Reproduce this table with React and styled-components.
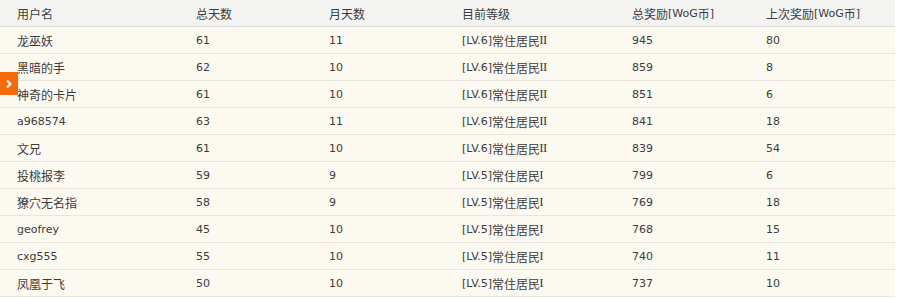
import React from "react";
import styled, { createGlobalStyle } from "styled-components";

const Global = createGlobalStyle`
  html, body { margin: 0; padding: 0; background: #fff; }
  body { font-family: "DejaVu Sans", "Noto Sans CJK SC", sans-serif; }
`;

const Wrap = styled.div`
  position: relative;
  width: 895px;
`;

const Table = styled.div`
  display: grid;
  grid-template-columns: 179px 133px 133px 170px 134px 146px;
  background: #fcf9f1;
`;

const Cell = styled.div`
  height: 26px;
  border-bottom: 1px solid ${p => (p.$head ? "#dcdcdc" : "#e9e5dc")};
  background: ${p => (p.$head ? "#f3f3f2" : "transparent")};
  padding-left: 17px;
  display: flex;
  align-items: center;
  font-size: 11px;
  color: #3c3c3c;
  font-family: "DejaVu Sans", "Noto Sans CJK SC", sans-serif;
  white-space: nowrap;
`;

const Cjk = styled.span`
  font-family: "Noto Sans CJK SC", sans-serif;
  font-size: 12px;
`;

const Roman = styled.span`
  font-family: "Liberation Serif", serif;
  font-size: 13px;
  letter-spacing: -0.5px;
  margin-left: -1px;
`;

const Tab = styled.div`
  position: absolute;
  left: 0;
  top: 72px;
  width: 18px;
  height: 23px;
  background: #f46a0c;
  display: flex;
  align-items: center;
  justify-content: center;
`;

const SPLIT_RE = /([ⅠⅡ]+|[\u3000-\u9fff\uff00-\uffef]+)/;

function Text({ children }) {
  const parts = String(children).split(SPLIT_RE);
  return parts.map((p, i) => {
    if (!p) return null;
    if (/^[ⅠⅡ]+$/.test(p)) return <Roman key={i}>{p.replace(/Ⅱ/g, "II").replace(/Ⅰ/g, "I")}</Roman>;
    if (i % 2 === 1) return <Cjk key={i}>{p}</Cjk>;
    return <span key={i}>{p}</span>;
  });
}

const head = ["用户名", "总天数", "月天数", "目前等级", "总奖励[WoG币]", "上次奖励[WoG币]"];
const rows = [
  ["龙巫妖", "61", "11", "[LV.6]常住居民Ⅱ", "945", "80"],
  ["黑暗的手", "62", "10", "[LV.6]常住居民Ⅱ", "859", "8"],
  ["神奇的卡片", "61", "10", "[LV.6]常住居民Ⅱ", "851", "6"],
  ["a968574", "63", "11", "[LV.6]常住居民Ⅱ", "841", "18"],
  ["文兄", "61", "10", "[LV.6]常住居民Ⅱ", "839", "54"],
  ["投桃报李", "59", "9", "[LV.5]常住居民Ⅰ", "799", "6"],
  ["獠穴无名指", "58", "9", "[LV.5]常住居民Ⅰ", "769", "18"],
  ["geofrey", "45", "10", "[LV.5]常住居民Ⅰ", "768", "15"],
  ["cxg555", "55", "10", "[LV.5]常住居民Ⅰ", "740", "11"],
  ["凤凰于飞", "50", "10", "[LV.5]常住居民Ⅰ", "737", "10"],
];

export default function App() {
  return (
    <Wrap>
      <Global />
      <Table>
        {head.map((h, i) => (
          <Cell key={"h" + i} $head><Text>{h}</Text></Cell>
        ))}
        {rows.map((r, ri) =>
          r.map((c, ci) => (
            <Cell key={ri + "-" + ci}><Text>{c}</Text></Cell>
          ))
        )}
      </Table>
      <Tab>
        <svg width="8" height="10" viewBox="0 0 8 10">
          <path d="M2 1.5 L5.5 5 L2 8.5" stroke="#fff" strokeWidth="2" fill="none" />
        </svg>
      </Tab>
    </Wrap>
  );
}
